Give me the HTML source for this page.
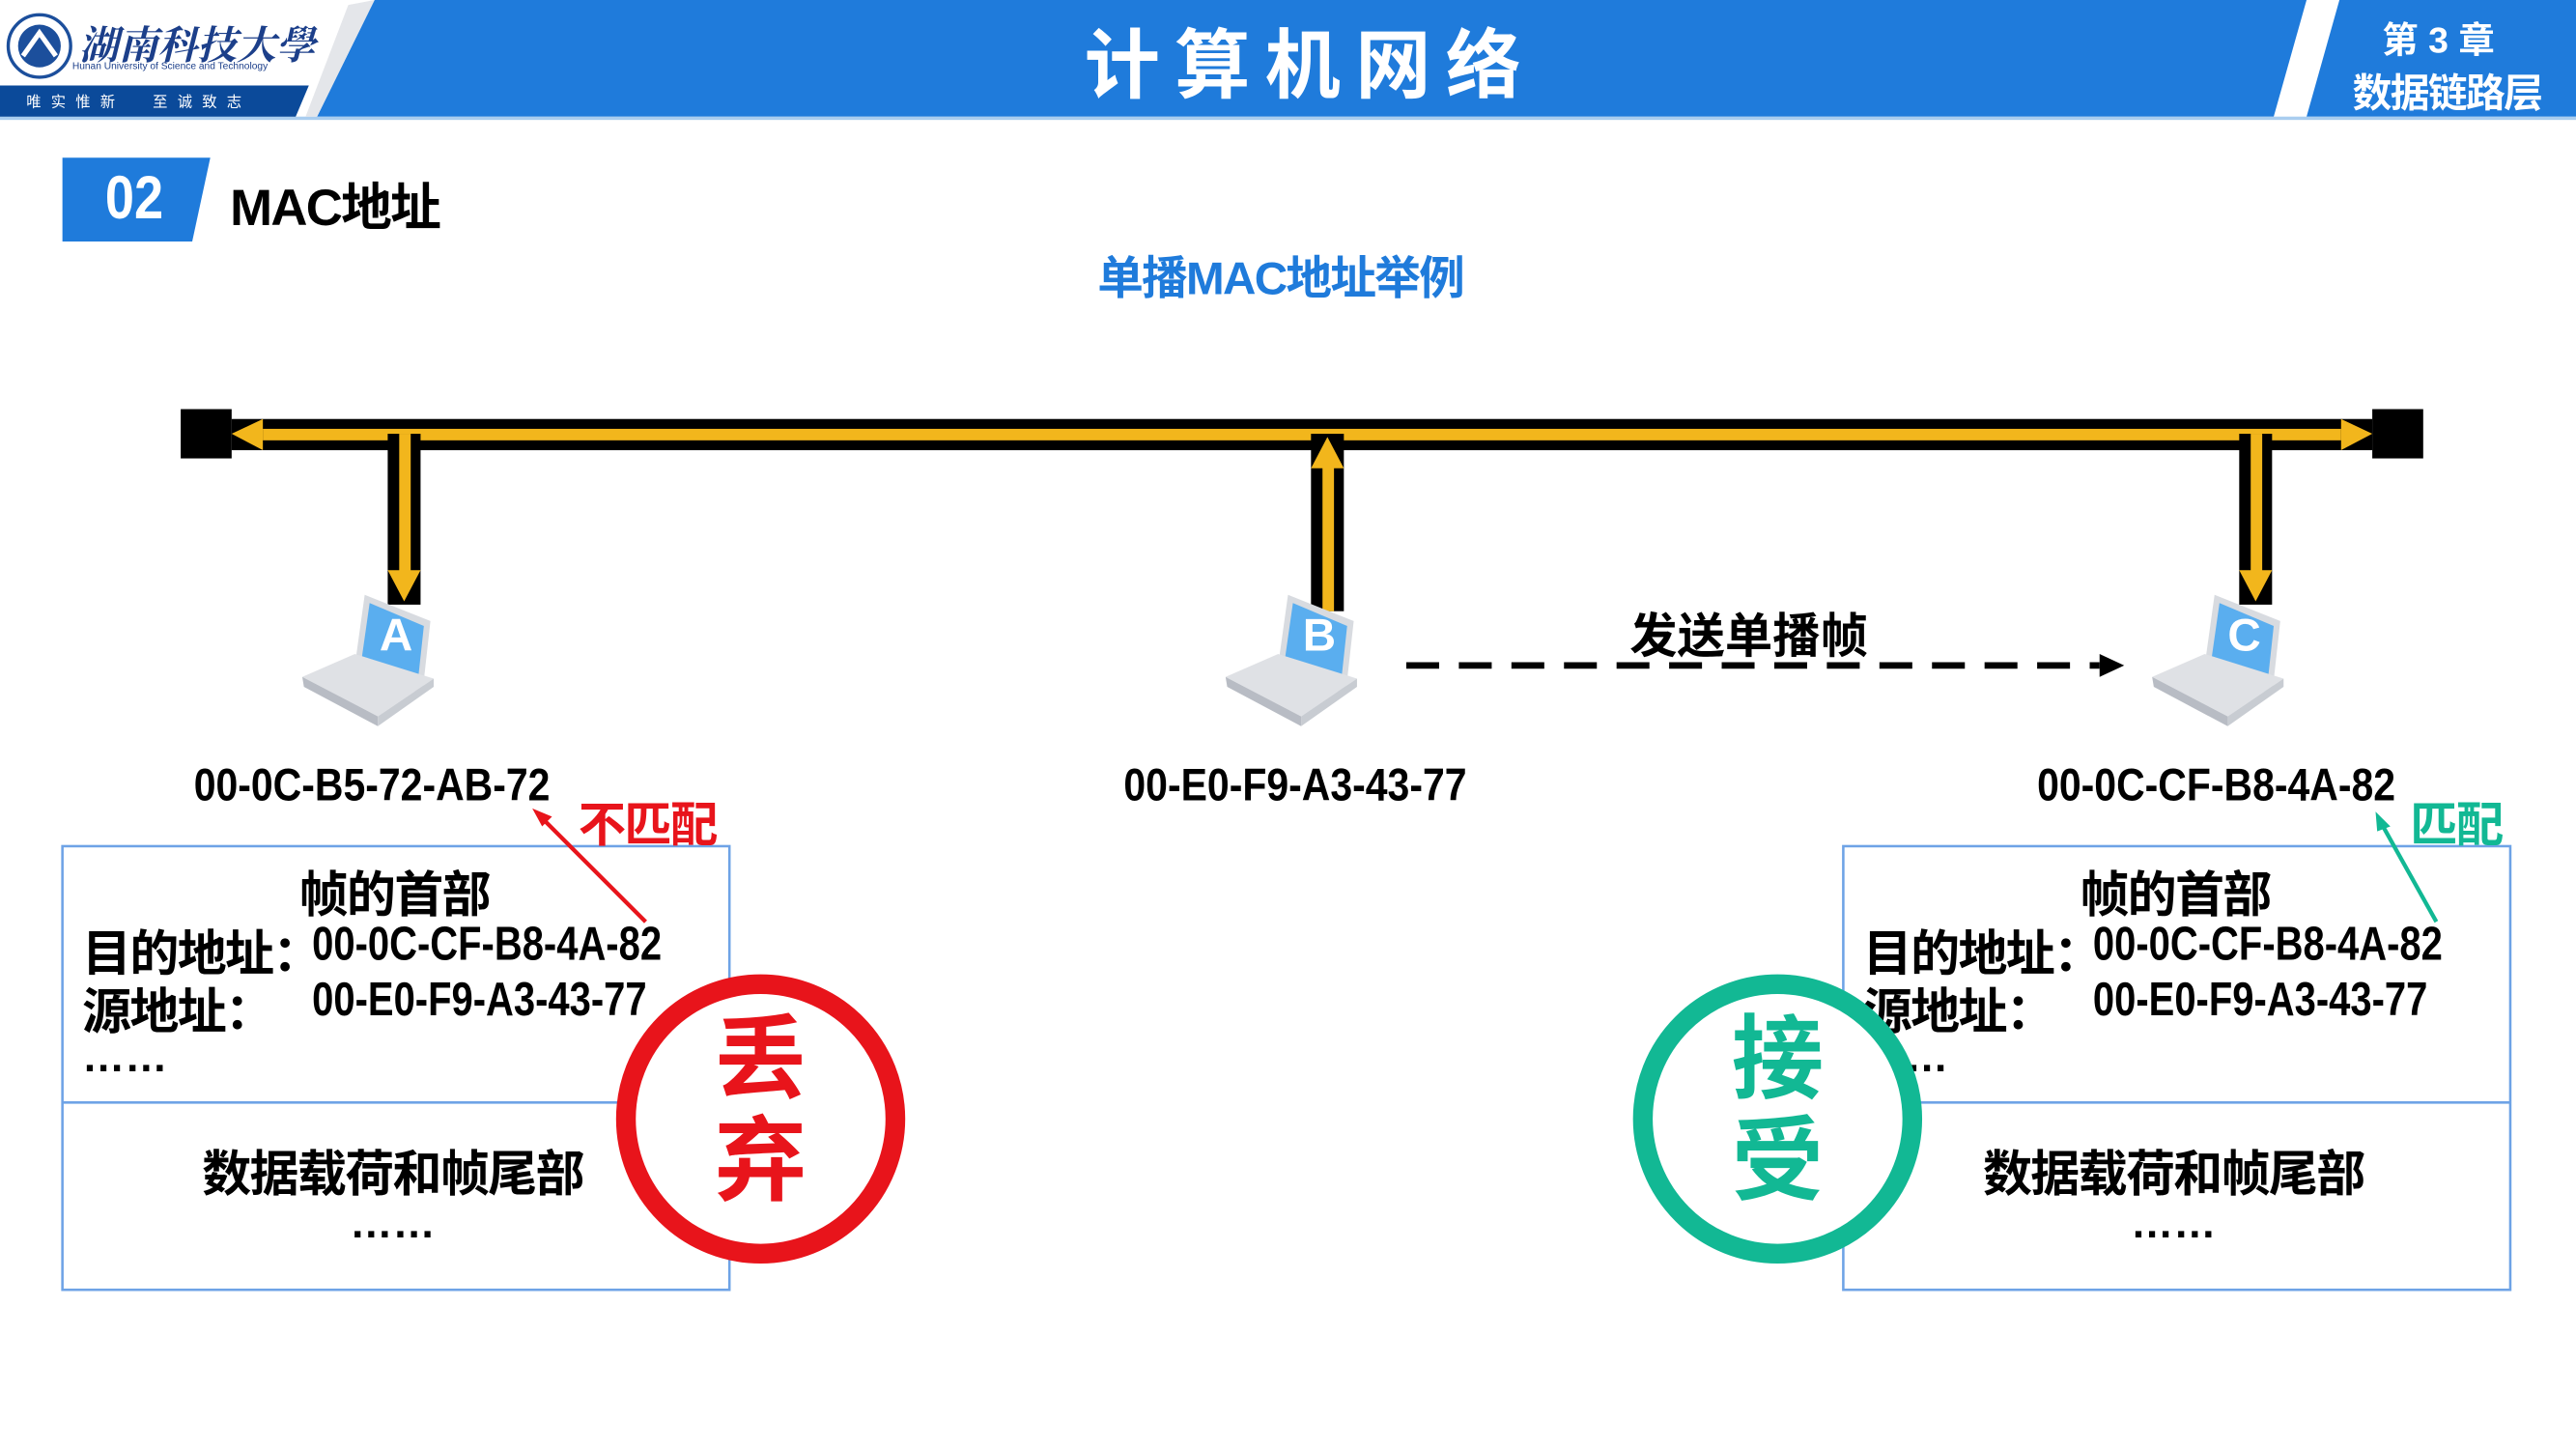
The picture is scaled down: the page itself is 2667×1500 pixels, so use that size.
<!DOCTYPE html>
<html><head><meta charset="utf-8"><style>
html,body{margin:0;padding:0;width:2667px;height:1500px;overflow:hidden;background:#fff}
#w{position:absolute;left:0;top:0;width:1568px;height:882px;transform:scale(1.70089);transform-origin:0 0;font-family:"Liberation Sans","Noto Sans CJK SC",sans-serif;font-weight:bold;color:#000}
.a{position:absolute;white-space:nowrap}
.n{display:inline-block;transform:scaleX(0.86);transform-origin:0 0}
.m{display:inline-block;transform:scaleX(0.81);transform-origin:0 0}
</style></head><body><div id="w">
<svg class="a" style="left:0;top:0" width="1568" height="882">
<rect x="0" y="0" width="1568" height="71" fill="#1f7bdb"/>
<rect x="0" y="71" width="1568" height="2" fill="#a9cdef"/>
<polygon points="0,0 228,0 193,71 0,71" fill="#fff"/>
<polygon points="212,3 228,0 193,71 186,71" fill="#e4e6ea"/>
<polygon points="0,52 188,52 180,71 0,71" fill="#0b4a9a"/>
<polygon points="1404,0 1424,0 1404,71 1384,71" fill="#fff"/>
<circle cx="24" cy="28" r="19" fill="#fff" stroke="#1c4f9c" stroke-width="2"/>
<circle cx="24" cy="28" r="13" fill="#1c4f9c"/>
<path d="M14 34 L24 20 L34 34" stroke="#fff" stroke-width="3" fill="none"/>
<polygon points="38,96 128,96 117,147 38,147" fill="#1f7bdb"/>
<rect x="110" y="249" width="31" height="30" fill="#000"/>
<rect x="1444" y="249" width="31" height="30" fill="#000"/>
<rect x="141" y="255" width="1303" height="19" fill="#000"/>
<rect x="160" y="261" width="1265" height="7" fill="#f2b61c"/>
<polygon points="141,264 160,255 160,274" fill="#f2b61c"/>
<polygon points="1444,264 1425,255 1425,274" fill="#f2b61c"/>
<rect x="236" y="264" width="20" height="104" fill="#000"/>
<rect x="243" y="264" width="7" height="85" fill="#f2b61c"/>
<polygon points="236,347 256,347 246,366" fill="#f2b61c"/>
<rect x="798" y="264" width="20" height="108" fill="#000"/>
<rect x="805" y="283" width="7" height="89" fill="#f2b61c"/>
<polygon points="798,285 818,285 808,266" fill="#f2b61c"/>
<rect x="1363" y="264" width="20" height="104" fill="#000"/>
<rect x="1370" y="264" width="7" height="85" fill="#f2b61c"/>
<polygon points="1363,347 1383,347 1373,366" fill="#f2b61c"/>
<g id="lp">
<polygon points="222,362 262,378 257,423 216,405" fill="#d8dbe0"/>
<polygon points="225,367 258,381 254,418 220,402" fill="#5aaeef"/>
<polygon points="184,412 216,398 264,413 230,436" fill="#dfe1e5"/>
<polygon points="184,412 230,436 230,442 185,418" fill="#b8bcc4"/>
<polygon points="230,436 264,413 264,418 230,442" fill="#c8ccd2"/>
</g>
<use href="#lp" transform="translate(562,0)"/>
<use href="#lp" transform="translate(1126,0)"/>
<line x1="856" y1="405" x2="1278" y2="405" stroke="#000" stroke-width="4" stroke-dasharray="20,12"/>
<polygon points="1293,405 1278,398 1278,412" fill="#000"/>
<rect x="38" y="515" width="406" height="270" fill="none" stroke="#6ea3e6" stroke-width="1.5"/>
<line x1="38" y1="671" x2="444" y2="671" stroke="#6ea3e6" stroke-width="1.5"/>
<rect x="1122" y="515" width="406" height="270" fill="none" stroke="#6ea3e6" stroke-width="1.5"/>
<line x1="1122" y1="671" x2="1528" y2="671" stroke="#6ea3e6" stroke-width="1.5"/>
<line x1="393" y1="561" x2="330" y2="498" stroke="#e8141b" stroke-width="2.5"/>
<polygon points="324,492 336,497 330,503" fill="#e8141b"/>
<line x1="1483" y1="561" x2="1450" y2="502" stroke="#12b894" stroke-width="2.5"/>
<polygon points="1446,494 1455,503 1447,506" fill="#12b894"/>
</svg>
<div class="a" style="left:48px;top:8px;font-size:24px;color:#1c3f8a;font-family:'Liberation Serif','Noto Serif CJK SC',serif;font-style:italic">湖南科技大學</div>
<div class="a" style="left:44px;top:38px;font-size:6px;color:#1c3f8a;font-weight:normal">Hunan University of Science and Technology</div>
<div class="a" style="left:16px;top:55px;font-size:9px;color:#fff;letter-spacing:6px;font-weight:normal">唯实惟新&nbsp;&nbsp;至诚致志</div>
<div class="a" style="left:660px;top:4px;font-size:46px;color:#fff;letter-spacing:9px">计算机网络</div>
<div class="a" style="left:1450px;top:7px;font-size:22px;color:#fff">第 3 章</div>
<div class="a" style="left:1432px;top:37px;font-size:24px;color:#fff;letter-spacing:-1px">数据链路层</div>
<div class="a" style="left:64px;top:100px;font-size:37px;color:#fff"><span class="n">02</span></div>
<div class="a" style="left:140px;top:101px;font-size:31px;letter-spacing:-1px">MAC地址</div>
<div class="a" style="left:668px;top:148px;font-size:28px;color:#1f7bdb;letter-spacing:-1px">单播MAC地址举例</div>
<div class="a" style="left:231px;top:371px;font-size:28px;color:#fff">A</div>
<div class="a" style="left:793px;top:371px;font-size:28px;color:#fff">B</div>
<div class="a" style="left:1356px;top:371px;font-size:28px;color:#fff">C</div>
<div class="a" style="left:992px;top:364px;font-size:29px;letter-spacing:0px">发送单播帧</div>
<div class="a" style="left:118px;top:462px;font-size:28px"><span class="n">00-0C-B5-72-AB-72</span></div>
<div class="a" style="left:684px;top:462px;font-size:28px"><span class="n">00-E0-F9-A3-43-77</span></div>
<div class="a" style="left:1240px;top:462px;font-size:28px"><span class="n">00-0C-CF-B8-4A-82</span></div>
<div class="a" style="left:352px;top:479px;font-size:29px;color:#e8141b;letter-spacing:-1px">不匹配</div>
<div class="a" style="left:1467px;top:479px;font-size:29px;color:#12b894;letter-spacing:-1px">匹配</div>

<div class="a" style="left:182px;top:520px;font-size:30px;letter-spacing:-1px">帧的首部</div>
<div class="a" style="left:50px;top:556px;font-size:30px;letter-spacing:-1px">目的地址：</div>
<div class="a" style="left:190px;top:559px;font-size:29px"><span class="m">00-0C-CF-B8-4A-82</span></div>
<div class="a" style="left:50px;top:591px;font-size:30px;letter-spacing:-1px">源地址：</div>
<div class="a" style="left:190px;top:593px;font-size:29px"><span class="m">00-E0-F9-A3-43-77</span></div>
<div class="a" style="left:50px;top:628px;font-size:26px">……</div>
<div class="a" style="left:123px;top:690px;font-size:30px;letter-spacing:-1px">数据载荷和帧尾部</div>
<div class="a" style="left:213px;top:729px;font-size:26px">……</div>

<div class="a" style="left:1266px;top:520px;font-size:30px;letter-spacing:-1px">帧的首部</div>
<div class="a" style="left:1134px;top:556px;font-size:30px;letter-spacing:-1px">目的地址：</div>
<div class="a" style="left:1274px;top:559px;font-size:29px"><span class="m">00-0C-CF-B8-4A-82</span></div>
<div class="a" style="left:1134px;top:591px;font-size:30px;letter-spacing:-1px">源地址：</div>
<div class="a" style="left:1274px;top:593px;font-size:29px"><span class="m">00-E0-F9-A3-43-77</span></div>
<div class="a" style="left:1134px;top:628px;font-size:26px">……</div>
<div class="a" style="left:1207px;top:690px;font-size:30px;letter-spacing:-1px">数据载荷和帧尾部</div>
<div class="a" style="left:1297px;top:729px;font-size:26px">……</div>

<div class="a" style="left:375px;top:593px;width:152px;height:152px;border:12px solid #e8141b;border-radius:50%;background:#fff"></div>
<div class="a" style="left:435px;top:614px;font-size:56px;line-height:62px;color:#e8141b">丢<br>弃</div>
<div class="a" style="left:994px;top:593px;width:152px;height:152px;border:12px solid #12b894;border-radius:50%;background:#fff"></div>
<div class="a" style="left:1054px;top:614px;font-size:56px;line-height:62px;color:#12b894">接<br>受</div>
</div></body></html>
